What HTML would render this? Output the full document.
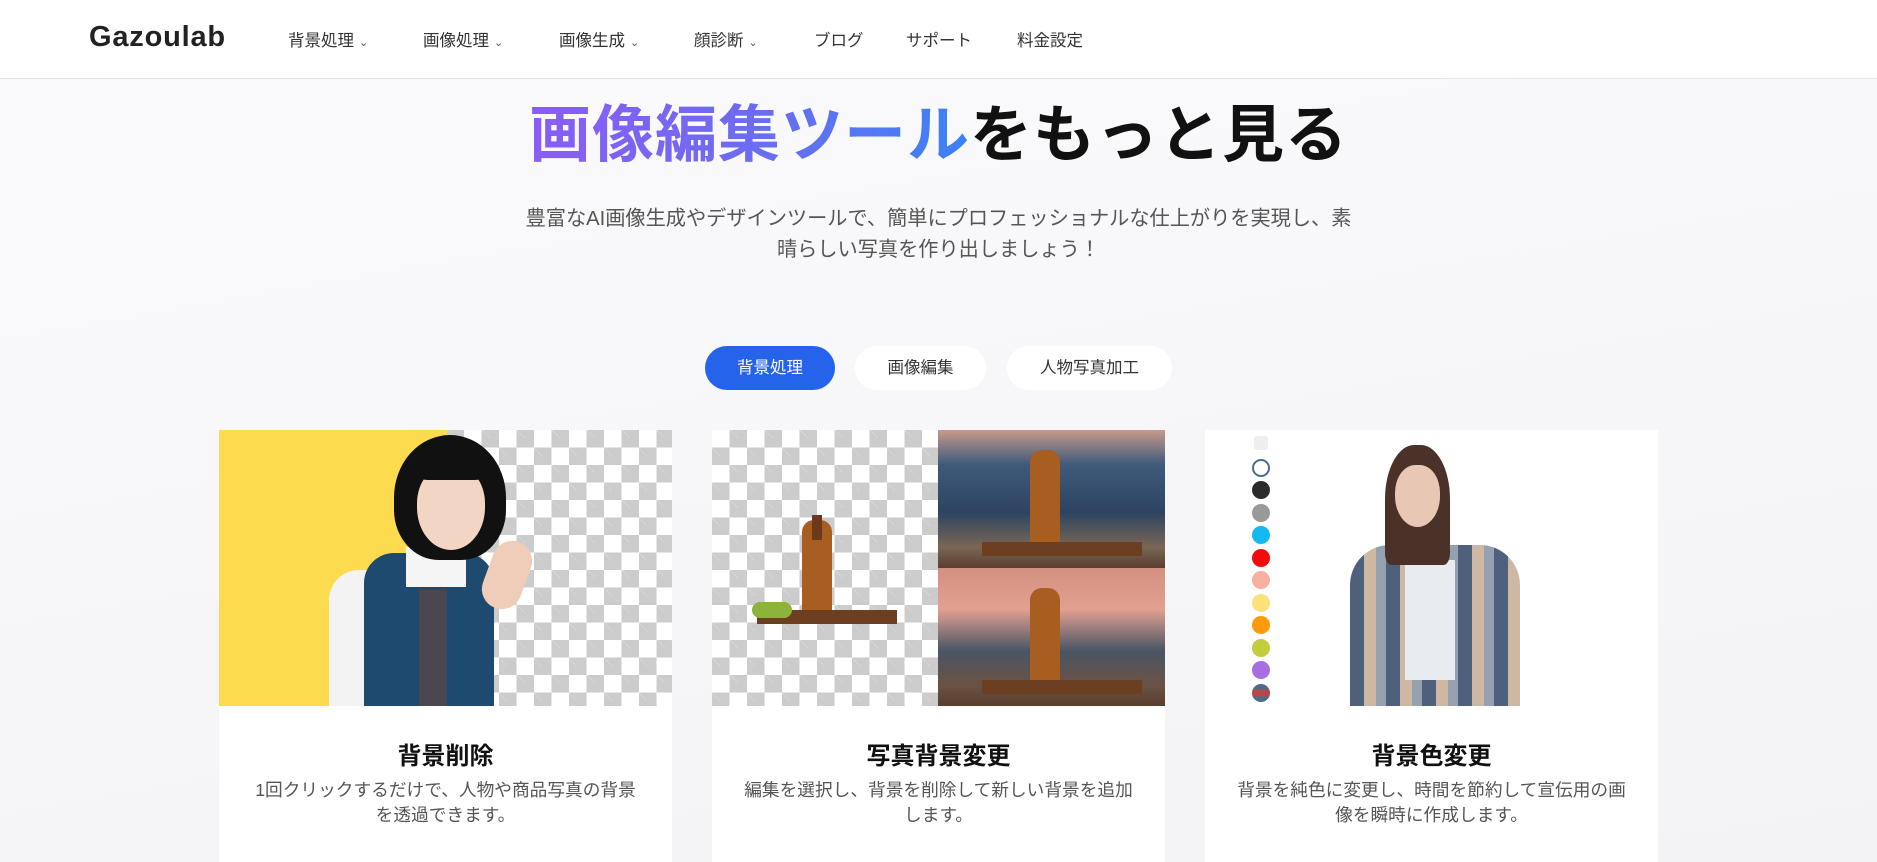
<!DOCTYPE html>
<html><head><meta charset="utf-8"><style>
*{margin:0;padding:0;box-sizing:border-box}
body{width:1877px;height:862px;overflow:hidden;background:linear-gradient(170deg,#fbfbfd 0%,#f6f6f8 60%,#f3f3f5 100%);font-family:"Liberation Sans","Noto Sans CJK JP",sans-serif;position:relative;color:#222}
.hdr{position:absolute;left:0;top:0;width:1877px;height:79px;background:#fff;border-bottom:1px solid #e6e6e8}
.logo{position:absolute;left:89px;top:21px;font-size:29px;font-weight:bold;color:#222;letter-spacing:0.8px}
.nav{position:absolute;top:27px;font-size:16.5px;color:#333}
.nav .c{font-size:11px;margin-left:5px;color:#555}
.title{position:absolute;left:0;width:1877px;top:84px;text-align:center;font-size:62px;font-weight:bold;color:#111;letter-spacing:1px}
.g{background:linear-gradient(90deg,#8b5cf6,#6d6cf0 50%,#3b82f6);-webkit-background-clip:text;background-clip:text;color:transparent}
.sub{position:absolute;left:0;width:1877px;top:204px;text-align:center;font-size:20.2px;line-height:31px;color:#555}
.tab{position:absolute;top:346px;height:44px;border-radius:22px;background:#fff;font-size:16.5px;color:#333;text-align:center;line-height:44px}
.tab.on{background:#2563eb;color:#fff}
.card{position:absolute;top:430px;width:453px;height:432px;background:#fff}
.img{position:absolute;left:0;top:0;width:453px;height:276px;overflow:hidden}
.chk{background-color:#fff;background-image:linear-gradient(45deg,#ccc 25%,transparent 25%,transparent 75%,#ccc 75%),linear-gradient(45deg,#ccc 25%,transparent 25%,transparent 75%,#ccc 75%);background-size:35px 35px;background-position:0 0,17.5px 17.5px}
.ct{position:absolute;top:306px;width:100%;text-align:center;font-size:24px;font-weight:bold;color:#111}
.cd{position:absolute;top:348px;left:20px;right:20px;text-align:center;font-size:17.7px;line-height:25px;color:#555}
.a{position:absolute}
.dot{position:absolute;left:1252px;width:18px;height:18px;border-radius:50%}
</style></head><body>
<div class="hdr">
<div class="logo">Gazoulab</div>
<div class="nav" style="left:288px">背景処理<span class="c">⌄</span></div>
<div class="nav" style="left:423px">画像処理<span class="c">⌄</span></div>
<div class="nav" style="left:559px">画像生成<span class="c">⌄</span></div>
<div class="nav" style="left:694px">顔診断<span class="c">⌄</span></div>
<div class="nav" style="left:814px">ブログ</div>
<div class="nav" style="left:906px">サポート</div>
<div class="nav" style="left:1017px">料金設定</div>
</div>
<div class="title"><span class="g">画像編集ツール</span>をもっと見る</div>
<div class="sub">豊富なAI画像生成やデザインツールで、簡単にプロフェッショナルな仕上がりを実現し、素<br>晴らしい写真を作り出しましょう！</div>
<div class="tab on" style="left:705px;width:130px">背景処理</div>
<div class="tab" style="left:855px;width:131px">画像編集</div>
<div class="tab" style="left:1007px;width:165px">人物写真加工</div>

<div class="card" style="left:219px">
<div class="img chk">
<div class="a" style="left:0;top:0;width:228px;height:276px;background:#fddb4f"></div>
<div class="a" style="left:110px;top:140px;width:60px;height:136px;background:#f3f3f3;border-radius:30px 10px 0 0"></div>
<div class="a" style="left:145px;top:123px;width:130px;height:153px;background:#1f4a70;border-radius:30px 30px 0 0"></div>
<div class="a" style="left:187px;top:117px;width:60px;height:40px;background:#f5f5f5"></div>
<div class="a" style="left:200px;top:160px;width:28px;height:116px;background:#4a4750"></div>
<div class="a" style="left:175px;top:5px;width:112px;height:125px;background:#111;border-radius:50% 50% 40% 40%"></div>
<div class="a" style="left:198px;top:35px;width:68px;height:85px;background:#f2d5c3;border-radius:45% 45% 50% 50%"></div>
<div class="a" style="left:195px;top:20px;width:75px;height:30px;background:#111;border-radius:40% 40% 20% 20%"></div>
<div class="a" style="left:268px;top:110px;width:40px;height:70px;background:#f0cdb8;border-radius:20px;transform:rotate(20deg)"></div>
</div>
<div class="ct">背景削除</div>
<div class="cd">1回クリックするだけで、人物や商品写真の背景<br>を透過できます。</div>
</div>

<div class="card" style="left:712px">
<div class="img">
<div class="a chk" style="left:0;top:0;width:226px;height:276px"></div>
<div class="a" style="left:226px;top:0;width:227px;height:138px;background:linear-gradient(180deg,#c89a8c 0%,#3f5a7a 25%,#2d4461 60%,#7a6655 85%,#5a3e2e 100%)"></div>
<div class="a" style="left:226px;top:138px;width:227px;height:138px;background:linear-gradient(180deg,#d49080 0%,#e1a090 30%,#4a5566 60%,#6a5244 85%,#5a3e2e 100%)"></div>
<div class="a" style="left:90px;top:90px;width:30px;height:100px;background:#a85e20;border-radius:12px 12px 3px 3px"></div>
<div class="a" style="left:100px;top:85px;width:10px;height:25px;background:#6a3a1a"></div>
<div class="a" style="left:45px;top:180px;width:140px;height:14px;background:#6b3f20"></div>
<div class="a" style="left:40px;top:172px;width:40px;height:16px;background:#8db33a;border-radius:8px"></div>
<div class="a" style="left:318px;top:20px;width:30px;height:100px;background:#a85e20;border-radius:12px 12px 3px 3px"></div>
<div class="a" style="left:270px;top:112px;width:160px;height:14px;background:#6b3f20"></div>
<div class="a" style="left:318px;top:158px;width:30px;height:100px;background:#a85e20;border-radius:12px 12px 3px 3px"></div>
<div class="a" style="left:270px;top:250px;width:160px;height:14px;background:#6b3f20"></div>
</div>
<div class="ct">写真背景変更</div>
<div class="cd">編集を選択し、背景を削除して新しい背景を追加<br>します。</div>
</div>

<div class="card" style="left:1205px">
<div class="img" style="background:#fff">
<div class="a" style="left:145px;top:115px;width:170px;height:161px;background:repeating-linear-gradient(90deg,#3b4f6e 0 14px,#c9b09a 14px 26px,#8a96a8 26px 36px),#556;opacity:.9;border-radius:40px 40px 0 0"></div>
<div class="a" style="left:200px;top:130px;width:50px;height:120px;background:#e6ecf0"></div>
<div class="a" style="left:180px;top:15px;width:65px;height:120px;background:#4a3228;border-radius:45% 45% 10% 10%"></div>
<div class="a" style="left:190px;top:35px;width:45px;height:62px;background:#e8c8b4;border-radius:45% 45% 50% 50%"></div>
</div>
<div class="ct">背景色変更</div>
<div class="cd">背景を純色に変更し、時間を節約して宣伝用の画<br>像を瞬時に作成します。</div>
</div>
<div class="dot" style="top:436px;background:#eee;border-radius:3px;width:14px;height:14px;left:1254px"></div>
<div class="dot" style="top:459px;border:2px solid #4a6a95;background:#fff"></div>
<div class="dot" style="top:481px;background:#2b2b2b"></div>
<div class="dot" style="top:504px;background:#999"></div>
<div class="dot" style="top:526px;background:#13b9f1"></div>
<div class="dot" style="top:549px;background:#f30a0a"></div>
<div class="dot" style="top:571px;background:#f7b0a0"></div>
<div class="dot" style="top:594px;background:#fbe27d"></div>
<div class="dot" style="top:616px;background:#fb9a0a"></div>
<div class="dot" style="top:639px;background:#c3cc3c"></div>
<div class="dot" style="top:661px;background:#a86ee0"></div>
<div class="dot" style="top:684px;background:linear-gradient(#4c6a8a 30%,#b84848 30% 70%,#4c6a8a 70%)"></div>
</body></html>
